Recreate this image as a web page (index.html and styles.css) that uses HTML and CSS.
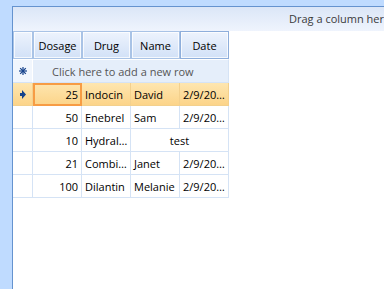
FILE: index.html
```html
<!DOCTYPE html>
<html lang="en">
<head>
    <meta charset="UTF-8">
    <meta name="viewport" content="width=device-width, initial-scale=1.0">
    <title>Prescriptions Grid</title>
    <link rel="stylesheet" href="styles.css">
</head>
<body>
    <div class="grid">
        <div class="group-panel">Drag a column here to group by this column</div>

        <table class="grid-table">
            <colgroup>
                <col class="col-indicator">
                <col class="col-data">
                <col class="col-data">
                <col class="col-data">
                <col class="col-data">
            </colgroup>
            <thead>
                <tr>
                    <th class="indicator"></th>
                    <th>Dosage</th>
                    <th>Drug</th>
                    <th>Name</th>
                    <th>Date</th>
                </tr>
            </thead>
            <tbody>
                <tr class="new-row">
                    <td class="indicator">
                        <svg width="8" height="8" viewBox="0 0 8 8">
                            <g stroke="#15428b" stroke-width="1.2">
                                <line x1="4" y1="0" x2="4" y2="8"/>
                                <line x1="0" y1="4" x2="8" y2="4"/>
                                <line x1="1.2" y1="1.2" x2="6.8" y2="6.8"/>
                                <line x1="6.8" y1="1.2" x2="1.2" y2="6.8"/>
                            </g>
                        </svg>
                    </td>
                    <td colspan="4" class="new-row-text">Click here to add a new row</td>
                </tr>
                <tr class="current">
                    <td class="indicator">
                        <svg width="6" height="9" viewBox="0 0 6 9">
                            <polygon points="0,3 2,3 2,0 6,4.5 2,9 2,6 0,6" fill="#15428b"/>
                        </svg>
                    </td>
                    <td class="num current-cell">25</td>
                    <td>Indocin</td>
                    <td>David</td>
                    <td>2/9/20…</td>
                </tr>
                <tr>
                    <td class="indicator"></td>
                    <td class="num">50</td>
                    <td>Enebrel</td>
                    <td>Sam</td>
                    <td>2/9/20…</td>
                </tr>
                <tr>
                    <td class="indicator"></td>
                    <td class="num">10</td>
                    <td>Hydral…</td>
                    <td colspan="2" class="merged">test</td>
                </tr>
                <tr>
                    <td class="indicator"></td>
                    <td class="num">21</td>
                    <td>Combi…</td>
                    <td>Janet</td>
                    <td>2/9/20…</td>
                </tr>
                <tr>
                    <td class="indicator"></td>
                    <td class="num">100</td>
                    <td>Dilantin</td>
                    <td>Melanie</td>
                    <td>2/9/20…</td>
                </tr>
            </tbody>
        </table>
    </div>
</body>
</html>
```

FILE: styles.css
```css
* {
    margin: 0;
    padding: 0;
    box-sizing: border-box;
}

html, body {
    height: 100%;
    overflow: hidden;
}

body {
    background-color: #bfdbff;
    font-family: 'Open Sans', 'Noto Sans', sans-serif;
    font-size: 11px;
    color: #000;
}

.grid {
    margin: 6px 0 0 12px;
    height: calc(100% - 6px);
    border-left: 1px solid #6593cf;
    border-top: 1px solid #6593cf;
    background-color: #fff;
}

.group-panel {
    height: 24px;
    line-height: 24px;
    padding-left: 276px;
    white-space: nowrap;
    overflow: hidden;
    color: #3b3b3b;
    background: linear-gradient(#dbe6f7, #eff4fd);
}

.grid-table {
    border-collapse: separate;
    border-spacing: 0;
    table-layout: fixed;
    width: 216px;
}

.col-indicator {
    width: 20px;
}

.col-data {
    width: 49px;
}

th {
    height: 28px;
    font-weight: normal;
    text-align: center;
    border: 1px solid #a9c3e6;
    background: linear-gradient(#edf3fd, #d2e1f7);
    box-shadow: inset 0 0 0 1px rgba(255, 255, 255, 0.75);
}

th:last-child {
    border-color: #8eaedb;
}

td {
    height: 23px;
    padding: 0 3px;
    white-space: nowrap;
    overflow: hidden;
    border-right: 1px solid #d5e3f5;
    border-bottom: 1px solid #d5e3f5;
}

td.indicator {
    padding: 0;
    text-align: center;
    line-height: 0;
}

.new-row td {
    height: 24px;
    border-top: 1px solid #fff;
    background-color: #e5eefa;
}

.new-row td.indicator {
    background-color: #f1f6fd;
    border-right-color: #fff;
}

.new-row-text {
    padding-left: 19px;
    color: #555;
}

.num {
    text-align: right;
}

.merged {
    text-align: center;
}

.current td {
    background: linear-gradient(#fee6b0, #fcd489);
    border-color: #f3d08d;
}

.current-cell {
    outline: 2px solid #f79c44;
    outline-offset: -2px;
}
```
